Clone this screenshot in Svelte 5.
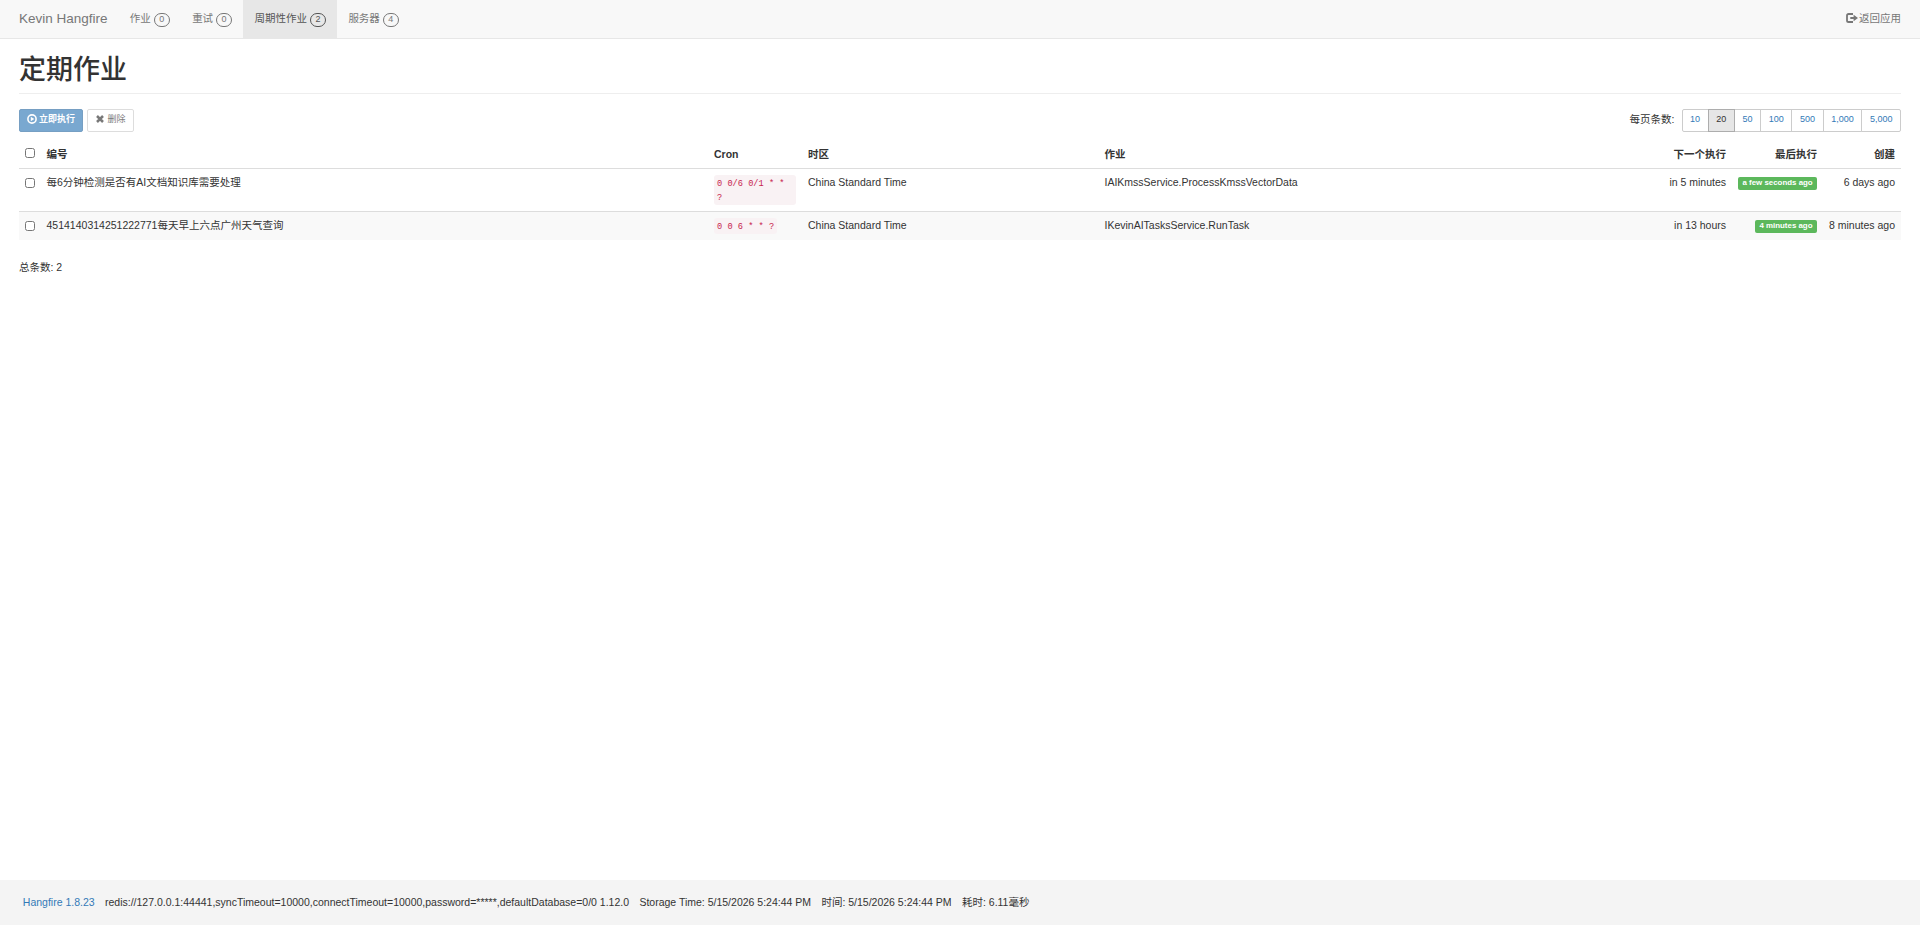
<script lang="ts">
  type Job = {
    id: string;
    cron: string;
    timeZone: string;
    job: string;
    next: string;
    last: string;
    created: string;
  };

  const menu = [
    { label: "作业", count: 0 },
    { label: "重试", count: 0 },
    { label: "周期性作业", count: 2 },
    { label: "服务器", count: 4 },
  ];

  const pageSizes = [10, 20, 50, 100, 500, 1000, 5000];

  const jobs: Job[] = [
    {
      id: "每6分钟检测是否有AI文档知识库需要处理",
      cron: "0 0/6 0/1 * * ?",
      timeZone: "China Standard Time",
      job: "IAIKmssService.ProcessKmssVectorData",
      next: "in 5 minutes",
      last: "a few seconds ago",
      created: "6 days ago",
    },
    {
      id: "4514140314251222771每天早上六点广州天气查询",
      cron: "0 0 6 * * ?",
      timeZone: "China Standard Time",
      job: "IKevinAITasksService.RunTask",
      next: "in 13 hours",
      last: "4 minutes ago",
      created: "8 minutes ago",
    },
  ];

  let current = $state("周期性作业");
  let perPage = $state(20);
  let selected: boolean[] = $state(jobs.map(() => false));

  let anySelected = $derived(selected.some((s) => s));
  let allSelected = $derived(selected.every((s) => s));

  function toggleAll() {
    const value = !allSelected;
    selected = jobs.map(() => value);
  }
</script>

<div class="page">
  <nav class="navbar">
    <a class="brand" href="#home">Kevin Hangfire</a>
    <ul class="menu">
      {#each menu as item}
        <li>
          <a href="#menu" class:active={current === item.label} onclick={() => (current = item.label)}>
            {item.label} <span class="metric">{item.count}</span>
          </a>
        </li>
      {/each}
    </ul>
    <a class="back" href="#back">
      <svg class="icon-out" viewBox="0 0 12 10">
        <path d="M7 1H2.6Q1 1 1 2.6V7.4Q1 9 2.6 9H7" fill="none" stroke="currentColor" stroke-width="1.8" />
        <path d="M4.3 3.9H7.6V1.7L12 5L7.6 8.3V6.1H4.3Z" fill="currentColor" />
      </svg>返回应用
    </a>
  </nav>

  <main>
    <h1>定期作业</h1>

    <div class="toolbar">
      <button class="btn primary" disabled={!anySelected}>
        <svg class="icon-play" viewBox="0 0 10 10">
          <circle cx="5" cy="5" r="4.1" fill="none" stroke="currentColor" stroke-width="1.6" />
          <path d="M3.8 2.7L7.3 5L3.8 7.3Z" fill="currentColor" />
        </svg>
        立即执行
      </button>
      <button class="btn" disabled={!anySelected}>
        <svg class="icon-remove" viewBox="0 0 8 8">
          <path d="M1 1L7 7M7 1L1 7" stroke="currentColor" stroke-width="2.5" />
        </svg>
        删除
      </button>

      <span class="per-page">每页条数:</span>
      <div class="btn-group">
        {#each pageSizes as size}
          <button class="btn link" class:active={perPage === size} onclick={() => (perPage = size)}>
            {size.toLocaleString("en-US")}
          </button>
        {/each}
      </div>
    </div>

    <table>
      <colgroup>
        <col class="c-check" />
        <col class="c-id" />
        <col class="c-cron" />
        <col class="c-zone" />
        <col />
        <col class="c-next" />
        <col class="c-last" />
        <col class="c-created" />
      </colgroup>
      <thead>
        <tr>
          <th><input type="checkbox" checked={allSelected} onchange={toggleAll} /></th>
          <th>编号</th>
          <th>Cron</th>
          <th>时区</th>
          <th>作业</th>
          <th class="right">下一个执行</th>
          <th class="right">最后执行</th>
          <th class="right">创建</th>
        </tr>
      </thead>
      <tbody>
        {#each jobs as job, i}
          <tr>
            <td><input type="checkbox" bind:checked={selected[i]} /></td>
            <td>{job.id}</td>
            <td class="cron"><code>{job.cron}</code></td>
            <td>{job.timeZone}</td>
            <td>{job.job}</td>
            <td class="right">{job.next}</td>
            <td class="right"><span class="label">{job.last}</span></td>
            <td class="right">{job.created}</td>
          </tr>
        {/each}
      </tbody>
    </table>

    <div class="total">总条数: {jobs.length}</div>
  </main>

  <footer>
    <a href="#hangfire">Hangfire 1.8.23</a>
    <span>redis://127.0.0.1:44441,syncTimeout=10000,connectTimeout=10000,password=*****,defaultDatabase=0/0 1.12.0</span>
    <span>Storage Time: 5/15/2026 5:24:44 PM</span>
    <span>时间: 5/15/2026 5:24:44 PM</span>
    <span>耗时: 6.11毫秒</span>
  </footer>
</div>

<style>
  :global(body) {
    margin: 0;
    background: #fff;
  }

  .page {
    box-sizing: border-box;
    height: 100vh;
    display: flex;
    flex-direction: column;
    font-family: "Liberation Sans", Arial, "Noto Sans CJK SC", sans-serif;
    font-size: 10.5px;
    line-height: 15px;
    color: #333;
  }

  a {
    text-decoration: none;
    color: #337ab7;
  }

  .navbar {
    display: flex;
    height: 38px;
    padding: 0 19px;
    background: #f8f8f8;
    border-bottom: 1px solid #e7e7e7;
  }

  .navbar a {
    color: #777;
    line-height: 15px;
    padding-top: 11px;
  }

  .navbar .brand {
    font-size: 13.5px;
    padding-right: 11px;
  }

  .menu {
    display: flex;
    margin: 0;
    padding: 0;
    list-style: none;
  }

  .menu a {
    display: flex;
    gap: 3px;
    box-sizing: border-box;
    height: 38px;
    padding: 11px 11.2px 0;
    white-space: nowrap;
  }

  .navbar .menu a.active {
    color: #555;
    background: #e7e7e7;
  }

  .metric {
    box-sizing: border-box;
    width: 16px;
    height: 14px;
    margin-top: 2px;
    border: 1px solid currentColor;
    border-radius: 8px;
    font-size: 9px;
    line-height: 11px;
    text-align: center;
  }

  .back {
    display: flex;
    margin-left: auto;
  }

  .icon-out {
    width: 12px;
    height: 10px;
    margin: 2px 1.5px 0 0;
  }

  main {
    flex: 1;
    padding: 0 19px;
  }

  h1 {
    margin: 16px 0 0;
    padding-bottom: 8px;
    border-bottom: 1px solid #eee;
    font-size: 27px;
    font-weight: 500;
    line-height: 30px;
  }

  .toolbar {
    display: flex;
    margin-top: 15px;
    height: 23px;
  }

  .btn {
    display: flex;
    box-sizing: border-box;
    height: 23px;
    margin: 0 4px 0 0;
    padding: 2.5px 7.5px 0;
    border: 1px solid #ccc;
    border-radius: 2px;
    background: #fff;
    color: #333;
    font-family: inherit;
    font-size: 9px;
    line-height: 13.5px;
  }

  .btn:disabled {
    opacity: 0.65;
  }

  .btn.primary {
    padding: 2.5px 7px 0;
    background: #337ab7;
    border-color: #2e6da4;
    color: #fff;
    font-weight: bold;
  }

  .icon-play {
    width: 10px;
    height: 10px;
    margin: 1.5px 2px 0 0;
  }

  .icon-remove {
    width: 8px;
    height: 8px;
    margin: 2.5px 3.5px 0 0.5px;
  }

  .per-page {
    margin: 3px 8px 0 auto;
  }

  .btn-group {
    display: flex;
  }

  .btn-group .btn {
    margin: 0 0 0 -1px;
    padding: 2.5px 7.6px 0;
    border-radius: 0;
    color: #337ab7;
  }

  .btn-group .btn:first-child {
    border-radius: 2px 0 0 2px;
  }

  .btn-group .btn:last-child {
    border-radius: 0 2px 2px 0;
  }

  .btn-group .btn.active {
    z-index: 1;
    background: #e6e6e6;
    border-color: #adadad;
    color: #333;
  }

  table {
    width: 100%;
    margin-top: 8px;
    table-layout: fixed;
    border-collapse: separate;
    border-spacing: 0;
  }

  .c-check { width: 21.5px; }
  .c-id { width: 667.5px; }
  .c-cron { width: 94px; }
  .c-zone { width: 296.5px; }
  .c-next { width: 80px; }
  .c-last { width: 91px; }
  .c-created { width: 78px; }

  th,
  td {
    padding: 6px;
    text-align: left;
    vertical-align: top;
    white-space: nowrap;
  }

  th {
    height: 16px;
    padding: 7px 6px 5px;
    border-bottom: 1px solid #ddd;
  }

  tbody tr:first-child td {
    height: 30px;
  }

  tbody tr:nth-child(2) td {
    height: 17px;
    padding-bottom: 5px;
    border-top: 1px solid #ddd;
    background: #f9f9f9;
  }

  th:first-child,
  td:first-child {
    padding-right: 0;
  }

  .right {
    text-align: right;
  }

  input {
    display: block;
    width: 10px;
    height: 10px;
    margin: 3px 0 0;
  }

  th input {
    margin-top: 1px;
  }

  .cron {
    white-space: normal;
  }

  code {
    display: block;
    width: fit-content;
    padding: 2px 3px 0;
    border-radius: 3px;
    background: #f9f2f4;
    color: #c7254e;
    font-family: "Liberation Mono", monospace;
    font-size: 8.66px;
    line-height: 14px;
  }

  .label {
    display: inline-block;
    height: 13px;
    padding: 0 4.5px;
    margin-top: 2px;
    border-radius: 2px;
    background: #5cb85c;
    color: #fff;
    font-size: 7.9px;
    font-weight: bold;
    line-height: 12px;
    vertical-align: top;
  }

  .total {
    margin-top: 20px;
  }

  footer {
    display: flex;
    gap: 10.4px;
    box-sizing: border-box;
    height: 45px;
    padding: 15px 22.8px 0;
    background: #f4f4f4;
  }
</style>
